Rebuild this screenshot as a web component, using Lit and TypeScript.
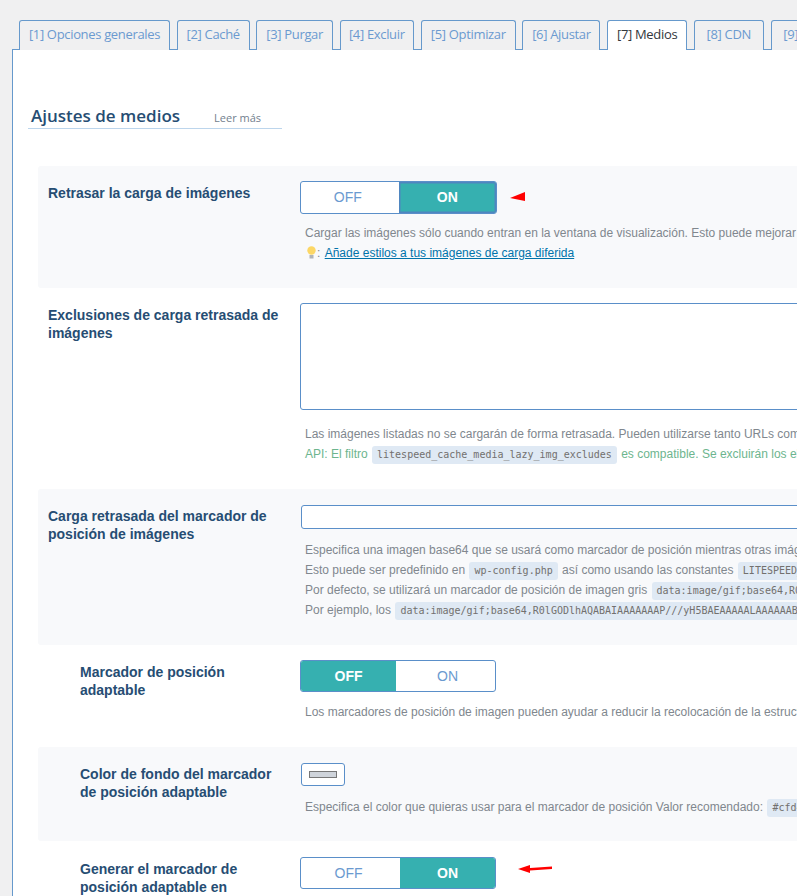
import { LitElement, html, css } from "lit";
import { customElement } from "lit/decorators.js";

const TABS: [string, number][] = [
  ["[1] Opciones generales", 151], ["[2] Caché", 73], ["[3] Purgar", 76.5], ["[4] Excluir", 74.5],
  ["[5] Optimizar", 95], ["[6] Ajustar", 78], ["[7] Medios", 80], ["[8] CDN", 70], ["[9] Toolbox", 90],
];

@customElement("app-root")
export class AppRoot extends LitElement {
  static styles = css`
    :host { display: block; width: 797px; height: 896px; overflow: hidden; background: #f0f0f1; font-family: "Liberation Sans", Arial, sans-serif; color: #3c434a; }
    * { box-sizing: border-box; }
    .tabs { display: flex; gap: 6.7px; padding: 20px 0 0 19px; width: 1000px; height: 50px; }
    .tab { flex: none; height: 30px; border: 1px solid #6699cc; border-bottom: none; border-top-width: 1.5px; border-radius: 3px 3px 0 0; background: #f0f0f1; color: #6b9ad0; font: 13px/27px "Open Sans", sans-serif; letter-spacing: -0.33px; text-align: center; white-space: nowrap; position: relative; }
    .tab.on { background: #fff; color: #32373c; z-index: 2; }
    .panel { width: 1000px; margin: -1px 0 0 12px; border: 1px solid #6699cc; background: #fff; padding: 42px 0 0 15px; height: 900px; }
    .head { display: flex; align-items: baseline; width: 254px; height: 37px; border-bottom: 1px solid #bcd5ec; padding: 12px 0 0 3px; }
    .head h3 { margin: 0; font: 600 17px/24px "Open Sans", sans-serif; color: #264d73; }
    .head a { margin-left: 34px; font: 11px "Open Sans", sans-serif; color: #72808e; }
    .rows { margin: 37px 0 0 10px; }
    .row { display: grid; grid-template-columns: 252px 1fr; padding: 15px 0 0 10px; white-space: nowrap; }
    .row.alt { background: #f8f9fb; border-radius: 3px; }
    .h122 { height: 122px; } .h201 { height: 201px; } .h156 { height: 156px; } .h102 { height: 102px; } .h94 { height: 94px; }
    .h60 { height: 60px; padding-top: 16px; }
    .label { font: bold 14px/18px "Liberation Sans", sans-serif; color: #264d73; white-space: normal; padding-top: 3px; width: 240px; }
    .label.sub { padding-left: 32px; width: 232px; }
    .toggle { display: flex; width: 196px; height: 32px; border: 1px solid #5a8fc9; border-radius: 3px; overflow: hidden; background: #fff; font: 14px/31px "Liberation Sans", sans-serif; text-align: center; color: #6b9ad0; }
    .toggle span { flex: 1 1 100px; }
    .toggle .off { padding-right: 4px; }
    .toggle .on { padding-left: 4px; }
    .toggle .act { flex: 1 1 96px; background: #36b0b0; color: #fff; font-weight: bold; padding: 0; }
    .toggle.strong { height: 33px; width: 197px; }
    .toggle.strong span { flex-basis: 98px; }
    .toggle.strong .act { box-shadow: inset 0 0 0 1.5px #4f86c0; flex-basis: 98px; }
    .ctl { position: relative; }
    .arrow { position: absolute; }
    .desc { margin: 9px 0 0 5px; font: 12px/20px "Liberation Sans", sans-serif; color: #80878e; }
    .desc.wide { margin-top: 14px; }
    .desc.mid { margin-top: 11px; }
    .desc.tw { margin-top: 10px; }
    .desc a { color: #0073aa; text-decoration: underline; margin-left: 1px; }
    .desc .api { color: #6db58e; }
    code { display: inline-block; background: #dfe9f4; border-radius: 3px; padding: 0 5px; margin: 0 1px; height: 18px; font: 10px/18px "DejaVu Sans Mono", "Liberation Mono", monospace; color: #72706e; vertical-align: baseline; }
    textarea { display: block; width: 900px; height: 107px; border: 1px solid #5a8fc9; border-radius: 3px; background: #fff; margin: 0; resize: none; }
    input { display: block; width: 900px; height: 24px; margin: 1px 0 0 1px; border: 1px solid #5a8fc9; border-radius: 3px; background: #fff; }
    .swatch { display: flex; align-items: center; justify-content: center; width: 44px; height: 23px; margin: 1px 0 0 1px; border: 1px solid #5a8fc9; border-radius: 3px; background: #fff; }
    .swatch i { display: block; width: 28px; height: 7px; background: #cfd4db; border: 1px solid #777; }
    .bulb { vertical-align: -2px; margin-left: 1px; }
  `;

  private toggle(on: boolean, strong = false) {
    return html`<div class="toggle ${strong ? "strong" : ""}"><span class="off ${on ? "" : "act"}">OFF</span><span class="on ${on ? "act" : ""}">ON</span></div>`;
  }

  render() {
    return html`
      <div class="tabs">
        ${TABS.map(([t, w], i) => html`<div class="tab ${i === 6 ? "on" : ""}" style="width:${w}px">${t}</div>`)}
      </div>
      <div class="panel">
        <div class="head"><h3>Ajustes de medios</h3><a>Leer más</a></div>
        <div class="rows">
          <div class="row alt h122">
            <div class="label">Retrasar la carga de imágenes</div>
            <div class="ctl">
              ${this.toggle(true, true)}
              <svg class="arrow" width="16" height="10" style="left:210px;top:11px"><polygon points="0,6 15,0 15,9" fill="#f00"/></svg>
              <div class="desc">Cargar las imágenes sólo cuando entran en la ventana de visualización. Esto puede mejorar mucho el tiempo de carga.<br>
                <svg class="bulb" width="11" height="13" viewBox="0 0 11 13"><circle cx="5.5" cy="4.5" r="4.2" fill="#fcd766"/><rect x="3.5" y="9" width="4" height="3.5" fill="#b0b4b8"/></svg><span>:</span> <a>Añade estilos a tus imágenes de carga diferida</a></div>
            </div>
          </div>
          <div class="row h201">
            <div class="label">Exclusiones de carga retrasada de imágenes</div>
            <div>
              <textarea></textarea>
              <div class="desc wide">Las imágenes listadas no se cargarán de forma retrasada. Pueden utilizarse tanto URLs completas como cadenas parciales.<br>
              <span class="api">API: El filtro <code>litespeed_cache_media_lazy_img_excludes</code> es compatible. Se excluirán los elementos con el atributo</span></div>
            </div>
          </div>
          <div class="row alt h156">
            <div class="label">Carga retrasada del marcador de posición de imágenes</div>
            <div>
              <input />
              <div class="desc mid">Especifica una imagen base64 que se usará como marcador de posición mientras otras imágenes terminan de cargarse.<br>
              Esto puede ser predefinido en <code>wp-config.php</code> así como usando las constantes <code>LITESPEED_PLACEHOLDER</code><br>
              Por defecto, se utilizará un marcador de posición de imagen gris <code>data:image/gif;base64,R0lGODlhAQABAIAAAAAAAP</code><br>
              Por ejemplo, los <code>data:image/gif;base64,R0lGODlhAQABAIAAAAAAAP///yH5BAEAAAAALAAAAAABAAEAAAIBRAA7</code></div>
            </div>
          </div>
          <div class="row h102">
            <div class="label sub">Marcador de posición adaptable</div>
            <div>
              ${this.toggle(false)}
              <div class="desc tw">Los marcadores de posición de imagen pueden ayudar a reducir la recolocación de la estructura cuando se cargan las imágenes.</div>
            </div>
          </div>
          <div class="row alt h94">
            <div class="label sub">Color de fondo del marcador de posición adaptable</div>
            <div>
              <div class="swatch"><i></i></div>
              <div class="desc mid">Especifica el color que quieras usar para el marcador de posición Valor recomendado: <code>#cfd4db</code></div>
            </div>
          </div>
          <div class="row h60">
            <div class="label sub">Generar el marcador de posición adaptable en segundo plano</div>
            <div class="ctl">
              ${this.toggle(true)}
              <svg class="arrow" width="36" height="10" style="left:218px;top:7px"><path d="M0 5 L12 1 L12 4 L34 2.5 L34 5 L12 6.5 L12 9 Z" fill="#f00"/></svg>
            </div>
          </div>
        </div>
      </div>
    `;
  }
}
